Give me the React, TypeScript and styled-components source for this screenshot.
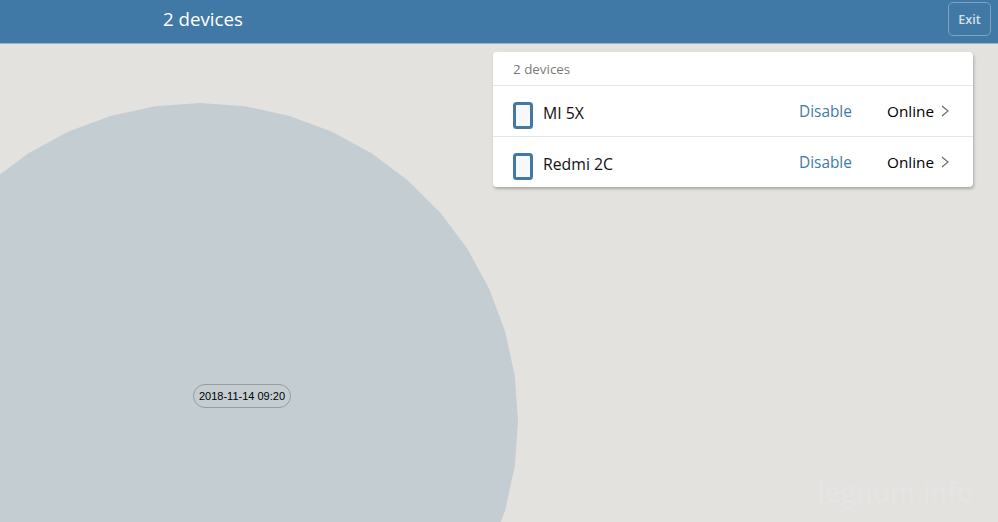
import React from "react";
import styled, { createGlobalStyle } from "styled-components";

const Global = createGlobalStyle`
  html, body { margin: 0; padding: 0; height: 100%; overflow: hidden; }
  #root { height: 100%; }
  body { font-family: "Open Sans", "Noto Sans", "Liberation Sans", sans-serif; }
`;

const Page = styled.div`
  width: 998px;
  height: 522px;
  display: flex;
  flex-direction: column;
  overflow: hidden;
`;

const Header = styled.header`
  height: 44px;
  flex: none;
  box-sizing: border-box;
  background: #4079a5;
  border-bottom: 1px solid #9fb3c2;
  display: flex;
  align-items: center;
  justify-content: space-between;
  padding: 0 7px 0 163px;
`;

const Title = styled.h1`
  margin: 0 0 5px;
  font-size: 18.7px;
  font-weight: 400;
  color: #fff;
  line-height: 24px;
`;

const ExitButton = styled.button`
  width: 43px;
  height: 34px;
  margin-bottom: 6px;
  padding: 2px 0 0;
  box-sizing: border-box;
  border: 1px solid #7fa3bf;
  border-radius: 5px;
  background: transparent;
  color: #d5e0e8;
  font-family: inherit;
  font-size: 12.5px;
  font-weight: 600;
`;

const MapArea = styled.main`
  position: relative;
  flex: 1;
  background: #e3e2de;
  overflow: hidden;
`;

const Coverage = styled.svg`
  position: absolute;
  left: -118px;
  top: 59px;
  width: 636px;
  height: 636px;
`;

const TimeTag = styled.div`
  position: absolute;
  left: 193px;
  top: 340px;
  width: 98px;
  height: 24px;
  box-sizing: border-box;
  border: 1px solid #9a9a9a;
  border-radius: 12px;
  display: flex;
  align-items: center;
  justify-content: center;
  font-family: "Liberation Sans", Arial, sans-serif;
  font-size: 11px;
  color: #000;
`;

const Panel = styled.section`
  position: absolute;
  left: 493px;
  top: 8px;
  width: 480px;
  background: #fff;
  border-radius: 4px;
  box-shadow: 1px 2px 3px rgba(0, 0, 0, 0.25);
`;

const PanelHeading = styled.div`
  height: 33px;
  box-sizing: border-box;
  padding: 0 20px;
  display: flex;
  align-items: center;
  font-size: 13.4px;
  color: #7a7a7a;
`;

const Row = styled.div`
  height: 51px;
  box-sizing: border-box;
  border-top: 1px solid #e6e6e6;
  display: flex;
  align-items: center;
  padding: 0 24px 0 20px;
`;

const DeviceIcon = styled.svg`
  width: 20px;
  height: 27px;
  flex: none;
  margin: 8px 10px 0 0;
`;

const DeviceName = styled.span`
  flex: 1;
  margin-top: 3px;
  font-size: 15.8px;
  color: #111;
`;

const DisableLink = styled.a`
  width: 88px;
  font-size: 15.4px;
  color: #3f7ba6;
`;

const Status = styled.span`
  font-size: 15.3px;
  color: #000;
`;

const Chevron = styled.svg`
  width: 8px;
  height: 12px;
  margin-left: 7px;
`;

const Watermark = styled.div`
  position: absolute;
  right: 24px;
  bottom: 12px;
  font-size: 27px;
  letter-spacing: 0.5px;
  color: #e6e4e6;
  line-height: 36px;
`;

const devices = ["MI 5X", "Redmi 2C"];

const SIDES = 44;
const coveragePoints = Array.from({ length: SIDES }, (_, i) => {
  const a = (i / SIDES) * Math.PI * 2;
  return `${(318 + 318 * Math.cos(a)).toFixed(1)},${(318 + 318 * Math.sin(a)).toFixed(1)}`;
}).join(" ");

export default function App() {
  return (
    <Page>
      <Global />
      <Header>
        <Title>2 devices</Title>
        <ExitButton>Exit</ExitButton>
      </Header>
      <MapArea>
        <Coverage viewBox="0 0 636 636">
          <polygon points={coveragePoints} fill="#c4cdd2" />
        </Coverage>
        <TimeTag>2018-11-14 09:20</TimeTag>
        <Panel>
          <PanelHeading>2 devices</PanelHeading>
          {devices.map((name) => (
            <Row key={name}>
              <DeviceIcon viewBox="0 0 20 27">
                <rect x="1.5" y="1.5" width="17" height="24" rx="2" fill="#f6f8fa" stroke="#4079a5" strokeWidth="3" />
              </DeviceIcon>
              <DeviceName>{name}</DeviceName>
              <DisableLink>Disable</DisableLink>
              <Status>Online</Status>
              <Chevron viewBox="0 0 8 12">
                <path d="M1 1l6 5-6 5" fill="none" stroke="#666" strokeWidth="1.1" />
              </Chevron>
            </Row>
          ))}
        </Panel>
        <Watermark>legnum.info</Watermark>
      </MapArea>
    </Page>
  );
}
